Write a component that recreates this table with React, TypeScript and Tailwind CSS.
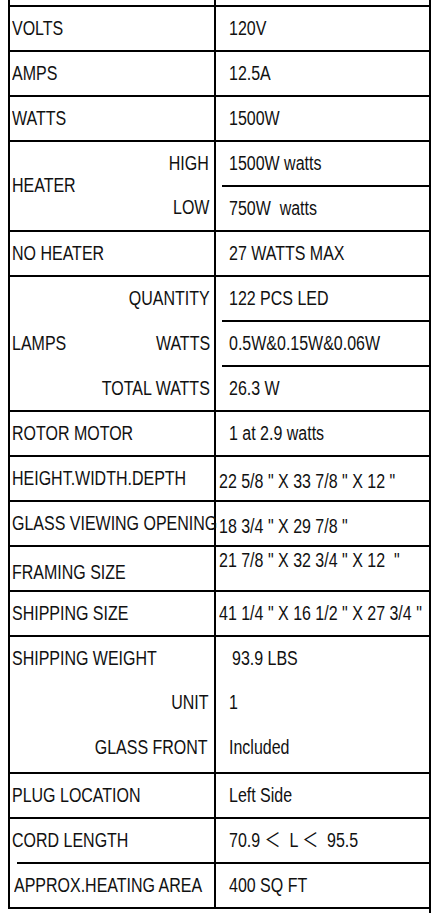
import type { ReactNode } from "react";

// the sheet uses a narrow face; squeeze Liberation Sans to its width
const T = ({ children, right = false }: { children: ReactNode; right?: boolean }) => (
  <span className={`inline-block whitespace-pre scale-x-[0.82] ${right ? "origin-right" : "origin-left"}`}>{children}</span>
);

const Cell = ({ children, className = "" }: { children: ReactNode; className?: string }) => (
  <div className={`flex h-[43px] items-center ${className}`}>{children}</div>
);

function Row({ label, value, valuePad = "pl-[13px]", labelClass = "", valueClass = "" }: {
  label: string;
  value: string;
  valuePad?: string;
  labelClass?: string;
  valueClass?: string;
}) {
  return (
    <div className="flex h-[45px] border-t-2 border-black">
      <div className={`flex w-[206px] shrink-0 items-center border-r-2 border-black pl-[2px] ${labelClass}`}>
        <T>{label}</T>
      </div>
      <div className={`flex flex-1 items-center overflow-hidden ${valuePad} ${valueClass}`}>
        <T>{value}</T>
      </div>
    </div>
  );
}

export default function App() {
  return (
    <div className="min-h-[913px] w-[436px] bg-white text-[19.5px] leading-none text-[#111] font-['Liberation_Sans','Noto_Sans_CJK_SC',sans-serif]">
      <div className="ml-2 w-[423px] border-x-2 border-black">
        {/* cut-off row above */}
        <div className="flex h-[5px]">
          <div className="w-[206px] border-r-2 border-black" />
        </div>

        <Row label="VOLTS" value="120V" />
        <Row label="AMPS" value="12.5A" />
        <Row label="WATTS" value="1500W" />

        {/* heater */}
        <div className="flex h-[90px] border-t-2 border-black">
          <div className="flex w-[206px] shrink-0 items-center justify-between border-r-2 border-black pl-[2px] pr-[5px]">
            <T>HEATER</T>
            <div className="flex flex-col items-end">
              <Cell className="h-[44px]"><T right>HIGH</T></Cell>
              <Cell className="h-[44px]"><T right>LOW</T></Cell>
            </div>
          </div>
          <div className="flex flex-1 flex-col">
            <Cell className="h-[42px] pl-[13px]"><T>1500W watts</T></Cell>
            <div className="ml-[6px] h-[2px] bg-black" />
            <Cell className="h-[44px] pl-[13px]"><T>750W  watts</T></Cell>
          </div>
        </div>

        <Row label="NO HEATER" value="27 WATTS MAX" />

        {/* lamps */}
        <div className="flex h-[135px] border-t-2 border-black">
          <div className="flex w-[206px] shrink-0 items-center justify-between border-r-2 border-black pl-[2px] pr-[5px]">
            <T>LAMPS</T>
            <div className="flex flex-col items-end">
              <Cell className="h-[41px]"><T right>QUANTITY</T></Cell>
              <Cell className="h-[47px]"><T right>WATTS</T></Cell>
              <Cell className="h-[43px]"><T right>TOTAL WATTS</T></Cell>
            </div>
          </div>
          <div className="flex flex-1 flex-col">
            <Cell className="h-[41px] pl-[13px]"><T>122 PCS LED</T></Cell>
            <div className="ml-[6px] h-[2px] bg-black" />
            <Cell className="pl-[13px]"><T>0.5W&amp;0.15W&amp;0.06W</T></Cell>
            <div className="ml-[6px] h-[2px] bg-black" />
            <Cell className="h-[40px] pl-[13px]"><T>26.3 W</T></Cell>
          </div>
        </div>

        <Row label="ROTOR MOTOR" value="1 at 2.9 watts" />
        <Row label="HEIGHT.WIDTH.DEPTH" value={'22 5/8 " X 33 7/8 " X 12 "'} valuePad="pl-[3px]" valueClass="pt-[6px]" />
        <Row label="GLASS VIEWING OPENING" value={'18 3/4 " X 29 7/8 "'} valuePad="pl-[3px]" valueClass="pt-[6px]" />
        <Row label="FRAMING SIZE" value={'21 7/8 " X 32 3/4 " X 12  "'} valuePad="pl-[3px]" labelClass="pt-[8px]" valueClass="pb-[16px]" />
        <Row label="SHIPPING SIZE" value={'41 1/4 " X 16 1/2 " X 27 3/4 "'} valuePad="pl-[3px]" />

        {/* shipping weight */}
        <div className="flex h-[137px] border-t-2 border-black">
          <div className="flex w-[206px] shrink-0 flex-col border-r-2 border-black pr-[6px]">
            <Cell className="pl-[2px]"><T>SHIPPING WEIGHT</T></Cell>
            <Cell className="h-[45px] justify-end"><T right>UNIT</T></Cell>
            <Cell className="h-[45px] justify-end"><T right>GLASS FRONT</T></Cell>
          </div>
          <div className="flex flex-1 flex-col">
            <Cell className="pl-4"><T>93.9 LBS</T></Cell>
            <Cell className="h-[45px] pl-[13px]"><T>1</T></Cell>
            <Cell className="h-[45px] pl-[13px]"><T>Included</T></Cell>
          </div>
        </div>

        <Row label="PLUG LOCATION" value="Left Side" />
        <Row label="CORD LENGTH" value="70.9 ＜  L ＜  95.5" />

        {/* last row: its top rule starts a little inside the left column */}
        <div className="flex h-[47px] border-b-2 border-black">
          <div className="flex w-[206px] shrink-0 flex-col border-r-2 border-black">
            <div className="ml-[7px] h-[2px] bg-black" />
            <div className="flex flex-1 items-center pl-[4px]"><T>APPROX.HEATING AREA</T></div>
          </div>
          <div className="flex flex-1 items-center border-t-2 border-black pl-[13px]"><T>400 SQ FT</T></div>
        </div>
      </div>
      <div className="ml-[429px] h-[5px] w-[2px] bg-black" />
    </div>
  );
}
